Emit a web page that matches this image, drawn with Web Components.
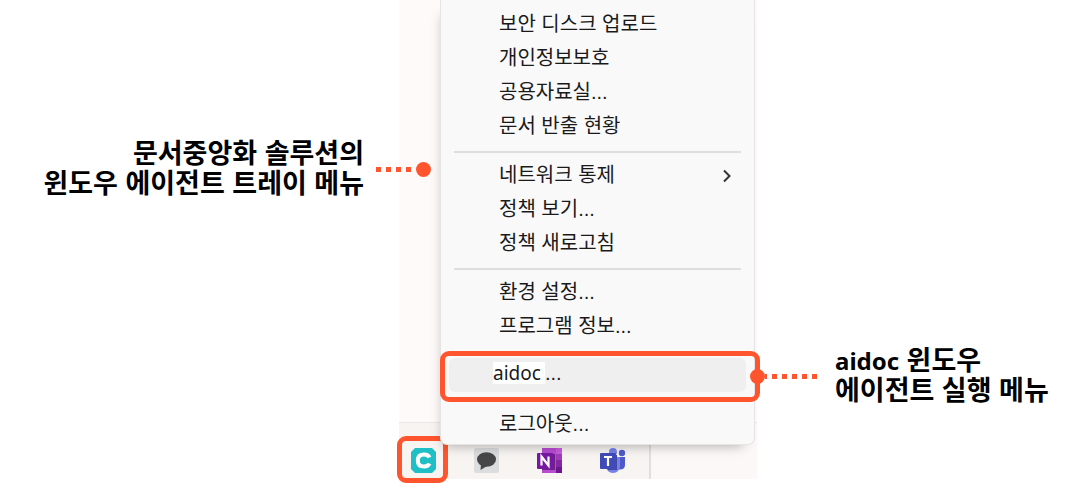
<!DOCTYPE html>
<html lang="ko">
<head>
<meta charset="utf-8">
<title>aidoc 트레이 메뉴</title>
<style>
	body {
		min-height: 100vh;
		margin: 0;
		background: #fff;
		font-family: "Liberation Sans", "Noto Sans CJK KR", sans-serif;
	}
</style>
</head>
<body>
<tray-guide></tray-guide>

<script>
/**
 * Menu entry, optionally with a submenu arrow or in the active state
 */
class MenuEntry extends HTMLElement {
	constructor() {
		super();
		this.attachShadow({ mode: 'open' });
	}

	connectedCallback() {
		const arrow = this.hasAttribute('submenu')
			? '<svg width="10" height="16" viewBox="0 0 10 16"><path d="M2 3.500 7.500 9 2 14.500" fill="none" stroke="#333" stroke-width="2"/></svg>'
			: '';

		this.shadowRoot.innerHTML = `
			<style>
				:host {
					display: block;
					position: relative;
				}
				button {
					display: flex;
					align-items: center;
					justify-content: space-between;
					width: 100%;
					padding: 0 14px 0 50px;
					border: none;
					border-radius: 6px;
					background: none;
					font: inherit;
					font-size: 20px;
					line-height: 34px;
					color: #1a1a1a;
					text-align: left;
				}
				:host([active]) button {
					padding-left: 44px;
					padding-bottom: 4px;
					background: #efefef;
					line-height: 30px;
				}
				:host([active])::after {
					content: "";
					position: absolute;
					inset: -7px -14px -10px -9px;
					border: 5px solid #ff552e;
					border-radius: 9px;
					pointer-events: none;
				}
			</style>
			<button type="button" role="menuitem"><span><slot></slot></span>${arrow}</button>
		`;
	}
}

/**
 * Popup menu of the tray agent
 */
class TrayMenu extends HTMLElement {
	constructor() {
		super();
		this.attachShadow({ mode: 'open' });
	}

	connectedCallback() {
		this.shadowRoot.innerHTML = `
			<style>
				:host {
					display: block;
					position: relative;
					z-index: 1;
					padding: 7px 8px 3px;
					background: #f9f9f9;
					border: 1px solid #e6e4e4;
					border-width: 0 1px 1px;
					border-radius: 0 0 7px 7px;
					box-shadow: -4px 8px 12px -8px rgba(0,0,0,0.35);
				}
				hr {
					height: 2px;
					margin: 8px 5px 5px;
					border: none;
					background: #dedede;
				}
				.name {
					display: inline-block;
					padding-right: 4px;
					background: #fff;
					font-family: "Noto Sans", sans-serif;
					font-size: 19px;
					line-height: 22px;
				}
			</style>
			<div role="menu">
				<menu-entry>보안 디스크 업로드</menu-entry>
				<menu-entry>개인정보보호</menu-entry>
				<menu-entry>공용자료실...</menu-entry>
				<menu-entry>문서 반출 현황</menu-entry>
				<hr>
				<menu-entry submenu>네트워크 통제</menu-entry>
				<menu-entry>정책 보기...</menu-entry>
				<menu-entry>정책 새로고침</menu-entry>
				<hr>
				<menu-entry>환경 설정...</menu-entry>
				<menu-entry>프로그램 정보...</menu-entry>
				<hr>
				<menu-entry active><span class="name">aidoc</span>...</menu-entry>
				<hr>
				<menu-entry>로그아웃...</menu-entry>
			</div>
		`;
	}
}

/**
 * Taskbar strip with the tray icons
 */
class TaskBar extends HTMLElement {
	constructor() {
		super();
		this.attachShadow({ mode: 'open' });
	}

	connectedCallback() {
		this.shadowRoot.innerHTML = `
			<style>
				:host {
					display: flex;
					border-top: 1px solid #ece7e6;
					background: #fcf8f7;
				}
				.tray {
					display: flex;
					gap: 38px;
					padding: 25px 24px 6px 12px;
					border-right: 2px solid #e4dfde;
					background: #f7f4f2;
				}
				button {
					display: block;
					position: relative;
					padding: 0;
					border: none;
					background: none;
				}
				svg {
					display: block;
				}
				.marked::after {
					content: "";
					position: absolute;
					inset: -12px -12px -10px -14px;
					border: 5px solid #ff552e;
					border-radius: 9px;
				}
			</style>
			<div class="tray">
				<button type="button" class="marked" aria-label="aidoc">
					<svg width="25" height="25" viewBox="0 0 25 25">
						<path d="M4 0H21L25 4V21L21 25H4L0 21V4Z" fill="#20bfc6"/>
						<path d="M18.500 9.500C17.500 7.300 15.600 6.500 13 6.500 9 6.500 6.800 8.800 6.800 12.500S9 18.500 13 18.500C15.600 18.500 17.500 17.700 18.500 15.500" fill="none" stroke="#fff" stroke-width="4"/>
					</svg>
				</button>
				<button type="button" aria-label="메신저">
					<svg width="25" height="25" viewBox="0 0 25 25">
						<rect width="25" height="25" rx="2" fill="#dcdddf"/>
						<ellipse cx="12.5" cy="11.5" rx="9.5" ry="7.3" fill="#47474a"/>
						<path d="M7 16 6.5 22 13 18Z" fill="#47474a"/>
					</svg>
				</button>
				<button type="button" aria-label="OneNote">
					<svg width="25" height="25" viewBox="0 0 25 25">
						<path d="M5 0H25V25H5Z" fill="#b84bd2"/>
						<path d="M19 0H25V6H19Z" fill="#c95bdd"/>
						<path d="M19 6H25V12H19Z" fill="#a23bbd"/>
						<path d="M19 12H25V19H19Z" fill="#8526a5"/>
						<path d="M19 19H25V25H19Z" fill="#6d158c"/>
						<path d="M5 6H18V22H5Z" fill="#6d2582"/>
						<rect y="5" width="16" height="16" rx="1" fill="#7818a2"/>
						<path d="M4.5 17.5V8.5L11.5 17.5V8.5" fill="none" stroke="#fff" stroke-width="2.2"/>
					</svg>
				</button>
				<button type="button" aria-label="Teams">
					<svg width="25" height="25" viewBox="0 0 25 25">
						<circle cx="13" cy="4" r="4" fill="#7581e8"/>
						<circle cx="22" cy="5" r="3.2" fill="#5059c9"/>
						<path d="M17 9H25V17C25 20 23 21.500 20 21.500H17Z" fill="#5059c9"/>
						<path d="M6 9H20V17C20 22 17 25 13 25S6 22 6 17Z" fill="#7581e8"/>
						<path d="M6 7H17V22H8L6 18Z" fill="#4149a5"/>
						<rect y="5" width="16" height="16" rx="1" fill="#414bb8"/>
						<path d="M4 9H12M8 9V18" fill="none" stroke="#fff" stroke-width="2.2"/>
					</svg>
				</button>
			</div>
		`;
	}
}

/**
 * Bold note with a dotted leader; side="start" or side="end" of the desktop
 */
class CalloutNote extends HTMLElement {
	constructor() {
		super();
		this.attachShadow({ mode: 'open' });
	}

	connectedCallback() {
		this.shadowRoot.innerHTML = `
			<style>
				:host {
					display: flex;
					align-items: center;
					gap: 12px;
					position: relative;
					z-index: 2;
				}
				:host([side="start"]) {
					align-self: start;
					justify-content: flex-end;
					padding-top: 139px;
					margin-right: -32px;
					text-align: right;
				}
				:host([side="end"]) {
					align-self: start;
					flex-direction: row-reverse;
					justify-content: flex-end;
					gap: 18px;
					padding-top: 346px;
					margin-left: -7px;
				}
				p {
					margin: 0;
					font-size: 27px;
					font-weight: 700;
					line-height: 30px;
					color: #000;
					white-space: nowrap;
				}
				.leader {
					display: flex;
					align-items: center;
				}
				:host([side="end"]) .leader {
					flex-direction: row-reverse;
				}
				.dots {
					width: 40px;
					height: 5px;
					background: repeating-linear-gradient(90deg, #ff552e 0 5px, transparent 5px 10px);
				}
				:host([side="end"]) .dots {
					width: 52px;
					background: repeating-linear-gradient(270deg, #ff552e 0 5px, transparent 5px 10px);
				}
				.dot {
					width: 15px;
					height: 15px;
					border-radius: 50%;
					background: #ff552e;
				}
			</style>
			<p><slot></slot></p>
			<div class="leader"><span class="dots"></span><span class="dot"></span></div>
		`;
	}
}

/**
 * The whole figure: desktop corner in the middle, notes at both sides
 */
class TrayGuide extends HTMLElement {
	constructor() {
		super();
		this.attachShadow({ mode: 'open' });
	}

	connectedCallback() {
		this.shadowRoot.innerHTML = `
			<style>
				:host {
					display: grid;
					grid-template-columns: minmax(0, 399fr) 358px minmax(0, 334fr);
					padding-bottom: 4px;
				}
				.desktop {
					display: flex;
					flex-direction: column;
					align-self: start;
					background: #fefaf9;
				}
				tray-menu {
					margin: 0 2px 0 41px;
				}
				task-bar {
					margin-top: -23px;
				}
				.latin {
					font-family: "Noto Sans", sans-serif;
					font-size: 24px;
					line-height: 1;
				}
			</style>
			<callout-note side="start">문서중앙화 솔루션의<br>윈도우 에이전트 트레이 메뉴</callout-note>
			<div class="desktop">
				<tray-menu></tray-menu>
				<task-bar></task-bar>
			</div>
			<callout-note side="end"><span class="latin">aidoc</span> 윈도우<br>에이전트 실행 메뉴</callout-note>
		`;
	}
}

customElements.define('menu-entry', MenuEntry);
customElements.define('tray-menu', TrayMenu);
customElements.define('task-bar', TaskBar);
customElements.define('callout-note', CalloutNote);
customElements.define('tray-guide', TrayGuide);
</script>
</body>
</html>
